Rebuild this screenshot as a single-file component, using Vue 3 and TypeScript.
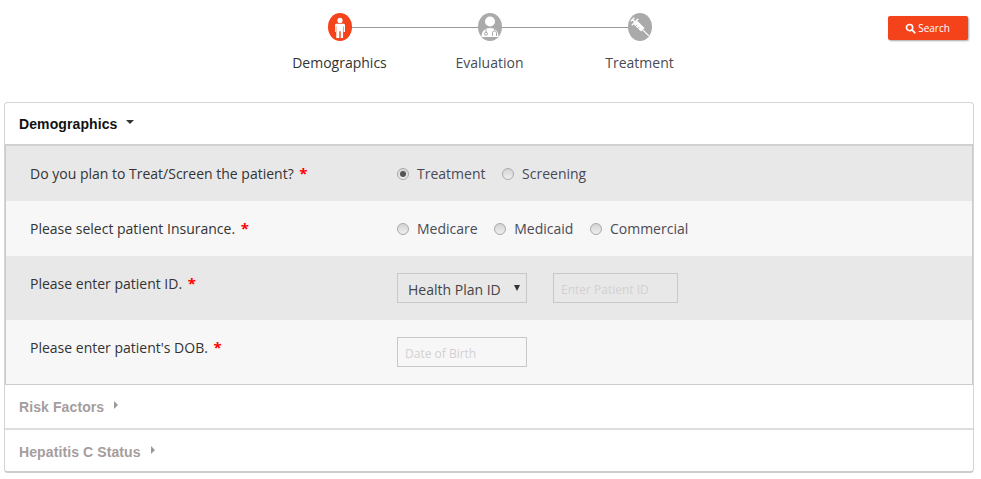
<template>
  <div class="page">
    <header class="top">
      <ol class="steps">
        <li v-for="(step, i) in steps" :key="step.label" class="step" :class="{ active: i === 0 }">
          <span class="dot">
            <svg v-if="step.icon === 'person'" viewBox="0 0 24 28" width="24" height="28">
              <circle cx="12" cy="7.400" r="2.600" fill="#fff" />
              <path d="M8.400 10.800h7.200c.8 0 1.400.6 1.400 1.400v6.800h-1.400v-5.600h-.5V25h-2.400v-6.800h-1.400V25H8.300V13.400h-.5V19H7v-6.800c0-.8.600-1.400 1.400-1.400z" fill="#fff" />
            </svg>
            <svg v-else-if="step.icon === 'doctor'" viewBox="0 0 24 28" width="24" height="28">
              <circle cx="12" cy="8.500" r="5" fill="#fff" />
              <path d="M3.500 24c0-6 3.500-9 8.500-9s8.500 3 8.500 9z" fill="#fff" />
              <path d="M8 15.500v3.500M16.500 15.500v1.800M14.500 23v-3.200a2 2 0 0 1 4 0V23" fill="none" stroke="#aaa" stroke-width="1" />
              <circle cx="8" cy="20.800" r="1.500" fill="none" stroke="#aaa" stroke-width="1" />
            </svg>
            <svg v-else viewBox="0 0 24 28" width="24" height="28">
              <g transform="rotate(-45 12 14)">
                <rect x="9.500" y="7.500" width="5" height="10.500" fill="#fff" />
                <path d="M7.500 7h9M12 4v3M9.500 3.500h5" stroke="#fff" stroke-width="1.400" fill="none" />
                <path d="M12 18v8.500" stroke="#fff" stroke-width="1.200" />
                <path d="M9.500 10.500h2M9.500 13.500h2" stroke="#aaa" stroke-width=".8" />
              </g>
            </svg>
          </span>
          <span class="step-label">{{ step.label }}</span>
        </li>
      </ol>
      <button class="search" type="button">
        <svg viewBox="0 0 12 12" width="11" height="11">
          <circle cx="5" cy="5" r="3.400" fill="none" stroke="#fff" stroke-width="1.800" />
          <path d="M7.600 7.600l3 3" stroke="#fff" stroke-width="2" stroke-linecap="round" />
        </svg>
        Search
      </button>
    </header>

    <section class="card">
      <h3 class="sec open">Demographics <i class="caret down"></i></h3>
      <div class="rows">
        <div class="row r1">
          <div class="q">Do you plan to Treat/Screen the patient? <b>*</b></div>
          <div class="a radios">
            <label v-for="o in ['Treatment', 'Screening']" :key="o">
              <span class="radio" :class="{ on: o === 'Treatment' }"></span>{{ o }}
            </label>
          </div>
        </div>
        <div class="row r2">
          <div class="q">Please select patient Insurance. <b>*</b></div>
          <div class="a radios">
            <label v-for="o in ['Medicare', 'Medicaid', 'Commercial']" :key="o">
              <span class="radio"></span>{{ o }}
            </label>
          </div>
        </div>
        <div class="row r3">
          <div class="q">Please enter patient ID. <b>*</b></div>
          <div class="a fields">
            <div class="select">Health Plan ID<i class="caret sel"></i></div>
            <input class="input id" placeholder="Enter Patient ID" />
          </div>
        </div>
        <div class="row r4">
          <div class="q">Please enter patient's DOB. <b>*</b></div>
          <div class="a fields">
            <input class="input dob" placeholder="Date of Birth" />
          </div>
        </div>
      </div>
      <h3 class="sec closed">Risk Factors <i class="caret right"></i></h3>
      <h3 class="sec closed last">Hepatitis C Status <i class="caret right"></i></h3>
    </section>
  </div>
</template>

<script setup lang="ts">
interface Step {
  label: string
  icon: 'person' | 'doctor' | 'syringe'
}

const steps: Step[] = [
  { label: 'Demographics', icon: 'person' },
  { label: 'Evaluation', icon: 'doctor' },
  { label: 'Treatment', icon: 'syringe' }
]
</script>

<style>
html, body {
  background: #fff;
}
</style>

<style scoped>
.page {
  width: 981px;
  height: 479px;
  overflow: hidden;
  font-family: "Open Sans", sans-serif;
  color: #333;
}

.top {
  height: 102px;
  position: relative;
}

.steps {
  list-style: none;
  margin: 0;
  padding: 13px 0 0 265px;
  display: flex;
}

.step {
  width: 150px;
  display: flex;
  flex-direction: column;
  align-items: center;
  position: relative;
}

.step:not(:last-child)::after {
  content: "";
  position: absolute;
  left: 75px;
  width: 150px;
  top: 14px;
  height: 1px;
  background: #999;
}

.dot {
  width: 24px;
  height: 28px;
  border-radius: 50%;
  background: #aaa;
  position: relative;
  z-index: 1;
  display: block;
}

.dot svg {
  display: block;
}

.active .dot {
  background: #f4421a;
}

.step-label {
  margin-top: 12px;
  margin-left: -1px;
  font-size: 14px;
  line-height: 20px;
  color: #4a4a55;
  white-space: nowrap;
}

.active .step-label {
  color: #333;
}

.search {
  position: absolute;
  left: 888px;
  top: 16px;
  width: 80px;
  height: 24px;
  border: 0;
  border-radius: 2px;
  background: #f4421a;
  box-shadow: 1px 1px 2px rgba(0, 0, 0, 0.35);
  color: #fff;
  font-family: "Open Sans", sans-serif;
  font-size: 10px;
  padding: 0 1px 0 0;
  display: flex;
  align-items: center;
  justify-content: center;
  gap: 2px;
}

.card {
  margin: 0 7px 0 4px;
  border: 1px solid #d4d4d4;
  border-bottom: 2px solid #ccc;
  border-radius: 4px;
  background: #fff;
  height: 371px;
  box-sizing: border-box;
}

.sec {
  margin: 0;
  padding-left: 14px;
  font-family: "Liberation Sans", Arial, sans-serif;
  font-size: 14px;
  font-weight: 700;
  letter-spacing: 0.1px;
  display: flex;
  align-items: center;
  gap: 9px;
  white-space: nowrap;
}

.open {
  height: 41px;
  color: #111;
  box-sizing: border-box;
}

.closed {
  height: 45px;
  color: #a59d9d;
  border-bottom: 2px solid #ddd;
  box-sizing: border-box;
}

.closed.last {
  border-bottom: 0;
  height: 41px;
  padding-top: 2px;
}

.caret {
  display: block;
  width: 0;
  height: 0;
  border-style: solid;
  border-color: transparent;
}

.caret.down {
  border-width: 4px 4.500px 0;
  border-top-color: #333;
  margin-top: -3px;
}

.caret.right {
  border-width: 4.500px 0 4.500px 4px;
  border-left-color: #999;
  margin-top: -3px;
  margin-left: 1px;
}

.rows {
  border: 1px solid #ccc;
  border-width: 2px 1px 1px;
  border-top-color: #d0d0d0;
}

.row {
  display: flex;
  font-size: 14px;
  line-height: 20px;
}

.r1 { height: 55px; background: #e8e8e8; }
.r2 { height: 55px; background: #f7f7f7; }
.r3 { height: 64px; background: #e8e8e8; }
.r4 { height: 64px; background: #f7f7f7; }

.q {
  width: 391px;
  padding: 17px 0 0 24px;
  box-sizing: border-box;
  color: #333;
  white-space: nowrap;
}

.q b {
  color: #f00;
  margin-left: 2px;
  font-size: 15px;
}

.a {
  display: flex;
  white-space: nowrap;
}

.radios {
  padding-top: 18px;
  gap: 16.600px;
  color: #4a4a55;
}

.radios label {
  display: flex;
  align-items: center;
  height: 20px;
}

.radio {
  width: 12px;
  height: 12px;
  box-sizing: border-box;
  border-radius: 50%;
  border: 1px solid #aaa;
  background: linear-gradient(#d4d4d4, #efefef);
  margin-right: 8px;
  position: relative;
}

.radio.on::after {
  content: "";
  position: absolute;
  left: 2px;
  top: 2px;
  width: 6px;
  height: 6px;
  border-radius: 50%;
  background: #555;
}

.fields {
  padding-top: 17px;
  gap: 26px;
}

.select {
  width: 130px;
  height: 30px;
  border: 1px solid #c8c8c8;
  box-sizing: border-box;
  padding: 6px 0 0 10px;
  color: #444;
  position: relative;
}

.caret.sel {
  position: absolute;
  right: 6px;
  top: 11px;
  border-width: 6px 3px 0;
  border-top-color: #333;
}

.input {
  height: 30px;
  border: 1px solid #c8c8c8;
  box-sizing: border-box;
  background: transparent;
  padding: 2px 6px 0 7px;
  font-family: "Open Sans", sans-serif;
  font-size: 12px;
  outline: 0;
}

.input::placeholder {
  color: #d4d0d0;
  opacity: 1;
}

.input.id { width: 125px; }
.input.dob { width: 130px; }
</style>
